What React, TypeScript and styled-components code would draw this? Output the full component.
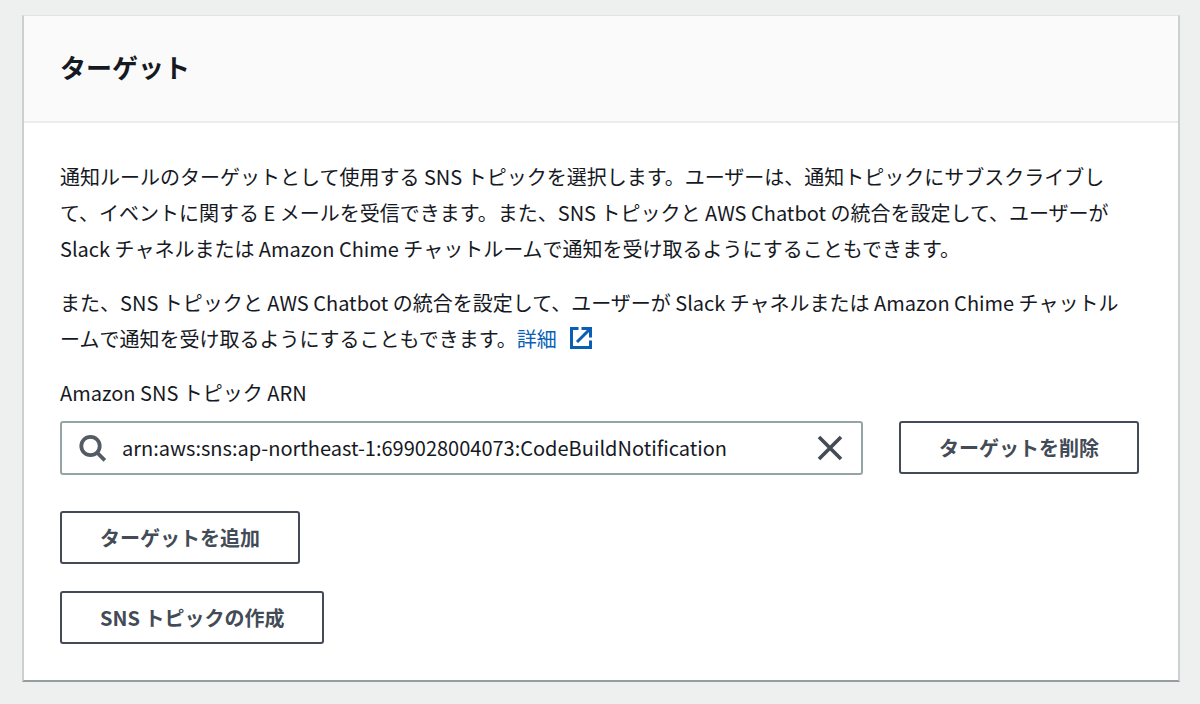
import React, { useState } from 'react';
import styled, { createGlobalStyle } from 'styled-components';

const GlobalStyle = createGlobalStyle`
  *, *::before, *::after { box-sizing: border-box; }
  body {
    margin: 0;
    background: #eef0f0;
    color: #16191f;
    font-family: "Noto Sans CJK JP", "Noto Sans", sans-serif;
    font-size: 20px;
    line-height: 36px;
  }
`;

const Page = styled.main`
  padding: 15px 20px 20px 22px;
`;

const Card = styled.section`
  background: #ffffff;
  border: 2px solid #cbd1d1;
  border-top: 1px solid #e0e4e4;
  border-bottom: 2px solid #939d9f;
`;

const CardHeader = styled.header`
  padding: 33px 36px 36px;
  background: #fafafa;
  border-bottom: 2px solid #eaeded;
`;

const Title = styled.h2`
  margin: 0;
  font-size: 26px;
  line-height: 36px;
  font-weight: 700;
`;

const CardBody = styled.div`
  padding: 36px 39px 36px 36px;
`;

const Paragraph = styled.p`
  margin: 0 0 18px;
  padding-right: 4px;
`;

const DocLink = styled.a`
  color: #0a5fb4;
  text-decoration: none;

  svg {
    margin-left: 12px;
    vertical-align: -3px;
  }
`;

const FieldLabel = styled.label`
  display: block;
  margin-bottom: 10px;
`;

const TargetRow = styled.div`
  display: flex;
  align-items: flex-start;
  gap: 36px;
  margin-bottom: 36px;
`;

const SearchBox = styled.div`
  display: flex;
  flex: 1;
  align-items: center;
  height: 54px;
  padding: 0 18px 0 17px;
  border: 2px solid #95a5a6;
  border-radius: 3px;
  background: #ffffff;

  &:focus-within { border-color: #0a5fb4; }
`;

const SearchInput = styled.input`
  flex: 1;
  min-width: 0;
  margin-left: 15px;
  padding: 0;
  border: 0;
  outline: 0;
  background: transparent;
  color: inherit;
  font: inherit;
`;

const ClearButton = styled.button`
  display: flex;
  padding: 0;
  border: 0;
  background: transparent;
  cursor: pointer;
`;

const Actions = styled.div`
  display: flex;
  flex-direction: column;
  align-items: flex-start;
  gap: 27px;
`;

const Button = styled.button`
  flex: none;
  height: 53px;
  padding: 0 38px;
  border: 2px solid #434b57;
  border-radius: 3px;
  background: #ffffff;
  color: #434b57;
  font: inherit;
  font-weight: 700;
  cursor: pointer;
`;

const ExternalIcon = () => (
  <svg width="24" height="24" viewBox="0 0 24 24" fill="none" stroke="#0a5fb4" strokeWidth="3" aria-hidden="true">
    <path d="M9.5 2.5H2.5V21.5H21.5V14.5" />
    <path d="M12.5 2.5H21.5V11.5" />
    <path d="M21 3L8 16" />
  </svg>
);

const SearchIcon = () => (
  <svg width="28" height="28" viewBox="0 0 28 28" fill="none" stroke="#545b64" strokeWidth="3.8" aria-hidden="true">
    <circle cx="11.5" cy="12" r="9.2" />
    <path d="M18 18.5L25.8 26.3" />
  </svg>
);

const CloseIcon = () => (
  <svg width="26" height="26" viewBox="0 0 26 26" fill="none" stroke="#434b57" strokeWidth="3.6" aria-hidden="true">
    <path d="M2 2L24 24M24 2L2 24" />
  </svg>
);

export default function App() {
  const [arn, setArn] = useState('arn:aws:sns:ap-northeast-1:699028004073:CodeBuildNotification');

  return (
    <>
      <GlobalStyle />
      <Page lang="ja">
        <Card>
          <CardHeader>
            <Title>ターゲット</Title>
          </CardHeader>
          <CardBody>
            <Paragraph>
              通知ルールのターゲットとして使用する SNS トピックを選択します。ユーザーは、通知トピックにサブスクライブして、イベントに関する E メールを受信できます。また、SNS トピックと AWS Chatbot の統合を設定して、ユーザーが Slack チャネルまたは Amazon Chime チャットルームで通知を受け取るようにすることもできます。
            </Paragraph>
            <Paragraph>
              また、SNS トピックと AWS Chatbot の統合を設定して、ユーザーが Slack チャネルまたは Amazon Chime チャットルームで通知を受け取るようにすることもできます。
              <DocLink href="#details">詳細<ExternalIcon /></DocLink>
            </Paragraph>
            <FieldLabel htmlFor="topic-arn">Amazon SNS トピック ARN</FieldLabel>
            <TargetRow>
              <SearchBox>
                <SearchIcon />
                <SearchInput id="topic-arn" value={arn} onChange={(e) => setArn(e.target.value)} />
                <ClearButton type="button" aria-label="クリア" onClick={() => setArn('')}>
                  <CloseIcon />
                </ClearButton>
              </SearchBox>
              <Button type="button">ターゲットを削除</Button>
            </TargetRow>
            <Actions>
              <Button type="button">ターゲットを追加</Button>
              <Button type="button">SNS トピックの作成</Button>
            </Actions>
          </CardBody>
        </Card>
      </Page>
    </>
  );
}
